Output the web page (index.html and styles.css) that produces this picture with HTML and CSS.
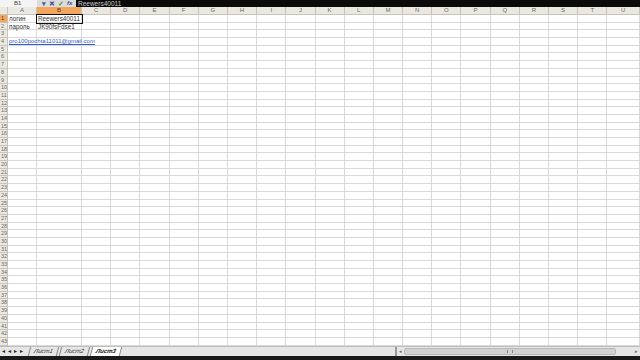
FILE: index.html
```html
<!DOCTYPE html>
<html lang="ru">
<head>
    <meta charset="UTF-8">
    <meta name="viewport" content="width=device-width, initial-scale=1.0">
    <title>Лист3</title>
    <link rel="stylesheet" href="styles.css">
</head>
<body>
    <div class="formula">
        <div class="namebox">B1</div>
        <div class="tools">
            <span class="drop">▾</span>
            <span class="cancel">✕</span>
            <span class="ok">✓</span>
            <span class="fx">fx</span>
        </div>
        <div class="input">Reewers40011</div>
    </div>

    <div class="sheet" id="sheet"></div>

    <div class="bottom">
        <div class="nav">
            <span>◂</span><span>◂</span><span>▸</span><span>▸</span>
        </div>
        <div class="tabs">
            <span class="tab">Лист1</span>
            <span class="tab">Лист2</span>
            <span class="tab active">Лист3</span>
        </div>
        <div class="hscroll">
            <span class="arrow">◂</span>
            <div class="thumb"><span class="grip"></span></div>
            <span class="arrow">▸</span>
        </div>
    </div>
    <div class="taskbar"></div>

<script>
    let sheet = document.querySelector("#sheet");
    const cols = "ABCDEFGHIJKLMNOPQRSTU".split("");
    const rows = 43;
    const data = {
        "A1": "логин",
        "B1": "Reewers40011",
        "A2": "пароль",
        "B2": "JK90fsFdse1",
        "A4": "pro100pochta11011@gmail.com"
    };

    const addCell = (cls, text) => {
        let cell = document.createElement("div");
        cell.className = cls;
        if (text) cell.textContent = text;
        sheet.appendChild(cell);
        return cell;
    };

    addCell("corner");
    for (let c of cols) {
        addCell(c === "B" ? "colhead sel" : "colhead", c);
    }

    for (let r = 1; r <= rows; r++) {
        addCell(r === 1 ? "rowhead sel" : "rowhead", String(r));
        for (let c of cols) {
            let key = c + r;
            let cls = "cell";
            if (key === "B1") cls += " active";
            if (key === "A4") cls += " link";
            addCell(cls, data[key]);
        }
    }
</script>
</body>
</html>
```

FILE: styles.css
```css
*{
    padding: 0;
    margin: 0;
    box-sizing: border-box;
}
body{
    width: 640px;
    height: 360px;
    overflow: hidden;
    display: flex;
    flex-direction: column;
    font-family: "Liberation Sans", Arial, sans-serif;
    font-size: 7px;
    color: #222;
    background-color: #fff;
}

/* formula bar */
.formula{
    height: 7px;
    display: flex;
    align-items: stretch;
    line-height: 7px;
}
.namebox{
    width: 37px;
    padding-left: 14px;
    background-color: #f4f4f4;
    color: #444;
    font-size: 6px;
}
.tools{
    width: 39px;
    display: flex;
    align-items: center;
    gap: 3px;
    padding-left: 5px;
    background-color: #dcdcdc;
    font-size: 7px;
    font-weight: bold;
}
.drop{
    color: #3a5fa8;
}
.cancel{
    color: #2b3a8c;
}
.ok{
    color: #3c9a3c;
}
.fx{
    color: #36508f;
    font-style: italic;
    font-size: 6px;
}
.input{
    flex: 1;
    background-color: #0b0b0b;
    color: #c8c8c8;
    padding-left: 2px;
    font-size: 6.5px;
}

/* grid */
.sheet{
    display: grid;
    grid-template-columns: 8px 29px 45px repeat(18, 29.2px) 1fr;
    grid-template-rows: 8px repeat(43, 7.7px);
    height: 339px;
    overflow: hidden;
}
.corner, .colhead, .rowhead{
    background-color: #ebe8e1;
    color: #6a6a6a;
    border-right: 1px solid #c9c4ba;
    border-bottom: 1px solid #c9c4ba;
    font-size: 6px;
    line-height: 7px;
}
.colhead{
    text-align: center;
}
.rowhead{
    font-size: 5.5px;
    padding-left: 1px;
    white-space: nowrap;
    overflow: hidden;
}
.sel{
    background-color: #f2a55c;
    color: #5a3a1a;
}
.cell{
    border-right: 1px solid #d9d9d9;
    border-bottom: 1px solid #d9d9d9;
    line-height: 7px;
    padding-left: 1px;
    white-space: nowrap;
    color: #333;
    font-size: 6.3px;
}
.cell.active{
    box-shadow: 0 0 0 1px #111;
    z-index: 2;
}
.cell.link{
    color: #3560c8;
    font-size: 6px;
    text-decoration: underline;
    overflow: visible;
    z-index: 1;
}

/* sheet tabs + scroll */
.bottom{
    height: 10px;
    display: flex;
    align-items: stretch;
    background-color: #e6e6e6;
    border-top: 1px solid #bdbdbd;
    line-height: 9px;
}
.nav{
    width: 29px;
    display: flex;
    gap: 3px;
    padding-left: 2px;
    font-size: 6px;
    color: #222;
}
.tabs{
    width: 366px;
    display: flex;
    gap: 2px;
    font-size: 6px;
    font-style: italic;
}
.tab{
    padding: 0 4px;
    color: #333;
    border-left: 1px solid #888;
    border-right: 1px solid #888;
    transform: skewX(-15deg);
}
.tab.active{
    background-color: #fff;
    font-weight: bold;
    color: #111;
}
.hscroll{
    flex: 1;
    display: flex;
    align-items: center;
    gap: 2px;
    padding: 0 2px;
    border-left: 2px solid #9a9a9a;
    font-size: 5px;
    color: #666;
}
.thumb{
    width: 212px;
    height: 7px;
    display: flex;
    justify-content: center;
    align-items: center;
    background-color: #d2d2d2;
    border: 1px solid #b8b8b8;
    border-radius: 2px;
}
.grip{
    width: 6px;
    height: 3px;
    border-left: 1px solid #888;
    border-right: 1px solid #888;
}
.arrow:last-child{
    margin-left: auto;
}
.taskbar{
    flex: 1;
    background-color: #1a1a1a;
}
```
